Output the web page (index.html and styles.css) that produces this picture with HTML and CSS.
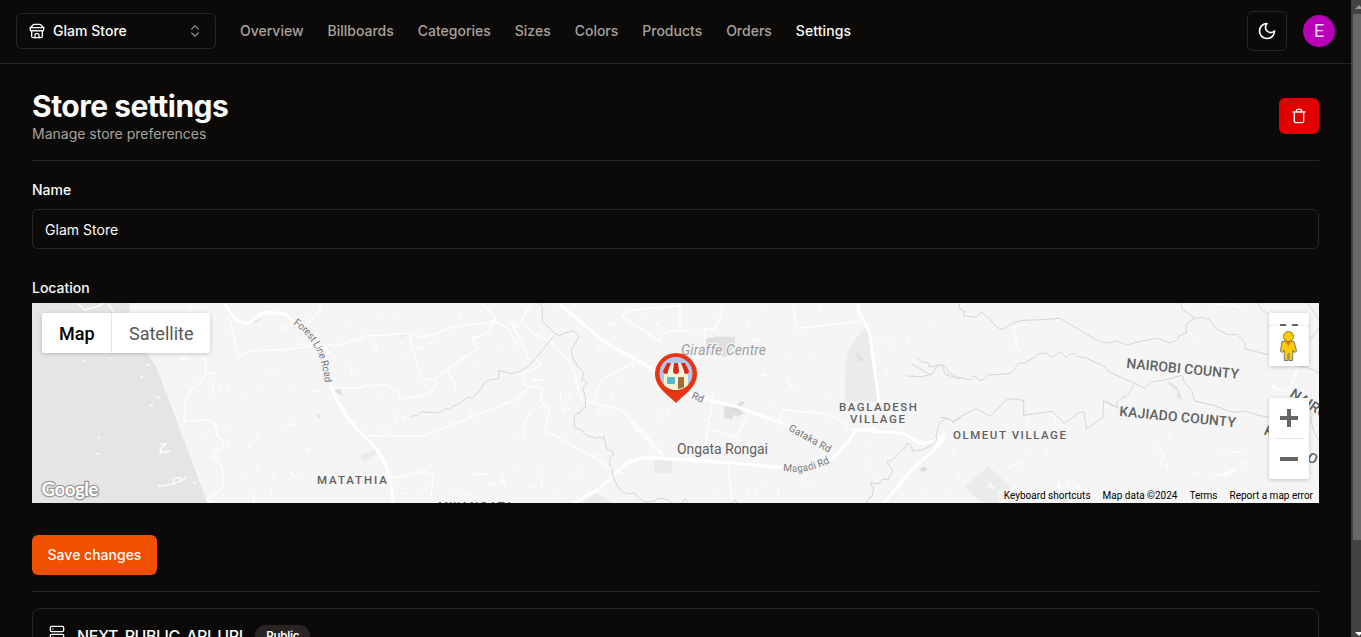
FILE: index.html
```html
<!DOCTYPE html>
<html lang="en">
<head>
<meta charset="utf-8">
<title>Store settings</title>
<link rel="stylesheet" href="styles.css">
</head>
<body>
<div class="app">
<div class="page">
  <header class="topbar">
    <button class="switcher">
      <svg class="icon16" viewBox="0 0 24 24"><path d="m2 7 4.41-4.41A2 2 0 0 1 7.83 2h8.34a2 2 0 0 1 1.42.59L22 7"/><path d="M4 12v8a2 2 0 0 0 2 2h12a2 2 0 0 0 2-2v-8"/><path d="M15 22v-4a2 2 0 0 0-2-2h-2a2 2 0 0 0-2 2v4"/><path d="M2 7h20"/><path d="M22 7v3a2 2 0 0 1-2 2a2.700 2.700 0 0 1-1.590-.63.700.700 0 0 0-.82 0A2.700 2.700 0 0 1 16 12a2.700 2.700 0 0 1-1.590-.63.700.700 0 0 0-.82 0A2.700 2.700 0 0 1 12 12a2.700 2.700 0 0 1-1.590-.63.700.700 0 0 0-.82 0A2.700 2.700 0 0 1 8 12a2.700 2.700 0 0 1-1.590-.63.700.700 0 0 0-.82 0A2.700 2.700 0 0 1 4 12a2 2 0 0 1-2-2V7"/></svg>
      <span>Glam Store</span>
      <svg class="icon16 chevrons" viewBox="0 0 24 24"><path d="m7 15 5 5 5-5M7 9l5-5 5 5"/></svg>
    </button>
    <nav class="nav">
      <a>Overview</a><a>Billboards</a><a>Categories</a><a>Sizes</a><a>Colors</a><a>Products</a><a>Orders</a><a class="active">Settings</a>
    </nav>
    <button class="theme"><svg class="icon20" viewBox="0 0 24 24"><path d="M12 3a6 6 0 0 0 9 9 9 9 0 1 1-9-9Z"/></svg></button>
    <div class="avatar">E</div>
  </header>
  <main class="content">
    <div class="heading">
      <div><h1>Store settings</h1><p>Manage store preferences</p></div>
      <button class="delete"><svg class="icon16" viewBox="0 0 24 24"><path d="M3 6h18M19 6v14c0 1-1 2-2 2H7c-1 0-2-1-2-2V6M8 6V4c0-1 1-2 2-2h4c1 0 2 1 2 2v2"/></svg></button>
    </div>
    <hr>
    <form class="form">
      <div class="field"><label class="name-label">Name</label><input value="Glam Store"></div>
      <div class="field">
        <label>Location</label>
        <div class="map">
          <svg class="tiles" viewBox="32 303 1287 200">
            <rect class="land" x="32" y="303" width="1287" height="200"/>
            <g transform="translate(32 300) scale(.33333)">
              <path class="park" d="M0 0H294L292 39Q320 130 372 198L530 618H0Z"/>
              <path class="shade" d="M30 190q50-25 80 0q-20 30-50 25zM120 190q30 30 30 70l-90 10q50-20 60-80zM210 190l90-60q-10 60-60 90zM20 410q70-20 100-70l80 20q-10 60-70 70l-40 50q-60 0-70-70zM230 410q60-10 110-60q0 60-90 80zM90 520q60-20 120-50q-20 60-80 60zM250 550l90-40q-20 60-90 60z"/>
              <path class="road" d="M136 10l22 20q35-8 58-20M228 10l17 26M480 10l-10 20M590 50l30 120l40-17l100-4l110-15l45 4l80-28M866 10l-4 22l-36 40M900 264h90M445 160l8 22l15-20M500 160q25 20 23 52q-5 30-45 58q-22 22-18 50q0 20-5 45l70-6q32 8 32 48q35 28 0 42q-20 12-15 22q30 20 30 45v40q0 15-48 42l32 29"/>
              <path class="road r2" d="M572 0l23 38Q615 70 650 70Q680 38 715 37L760 42L800 80M870 130l22 30M897 240v22q28 75 93 140"/>
              <path class="river" d="M665 68l18-10"/>
              <path class="road" d="M378 558q45-1 85-24l-3-4M426 552l-3-16l21-4l4 14M384 432h18l-17 14l4 12l24-5M388 445l-5 14M484 546l9 5M153 180l8 5M325 234l8-5M346 193l8 6M372 290l14 6M352 315l11 3M196 411l8 4M192 459l11 6M516 219h35M712 213l18-5M562 258l6 15M543 245l-2 38M630 297l14-7M756 382l35-12M668 405l18 12M583 439l10-5M647 442l12-6M822 443l12 8M776 516l12 16h15M734 521l-16 8M683 498l-9 19M640 512v16M580 374l4 10M750 84h20M930 205l11-4M957 213l5 18M945 64l10-3M820 130l-20 5M910 295l30 35M665 575v33M716 568l3 14M760 590h15M553 397v13M507 417l7-4M782 260l12-5M848 274h16M588 258l4 12M678 268h12M900 175l10-9"/>
              <path class="building b2" d="M908 270l15-3l12 20l-18-5zM848 341l15 5v10z"/>
            </g>
            <g transform="translate(360 300) scale(.33333)">
              <path class="building" d="M112 100h32l-6 8l-20 7zM0 466l48-18v16L10 490zM884 480l52 3v38l-54-2z"/><path class="building" d="M665 610l43-30l52 30z"/>
              <path class="road" d="M4 125v-16l145-9l37 12l46-12l46-18l130-18M365 10l42 40v15l35 20l34 50l14-2l-32-50l18-6l-12-5h-20M483 68l30-58M490 135l16 45M485 70l37 30l50 25l40 40q20 20 30 50l23 85l48 12l65 15q53 43 130 135M565 120l16-20M148 100l10 50l27 85l39 3l75-57l57-35l-20-33l28-5q35-20 37-53M260 212l15 22l12 20l-5 20M0 259l88-6l12 18h15l7 27l75-14l28-20v-28M25 407h168L465 300l48-42l35 8l-8 35l28 29l-14 60l155 85l35 26l47 19M700 310l22-68l100-57M526 177l18 14l-16 15l-37 15v32l20 6M513 335l-23 40l4 42M90 536l105-23l25 15l-6 50l4 30M786 50l18-18l155-15M786 50l115 75M900 125q5-30 40-32h50M960 12v82"/>
              <path class="road r2" d="M0 395Q60 450 81 505Q95 540 99 610M598 12l130 110L890 215M640 610L720 565L790 498Q825 470 875 472L990 480"/>
              <path class="river" d="M533 10q14 4 14 15v37l34 35l15 10l40-15q20 8 20 20l-22 38l5 25q12 25 34 45l-8 20q15 0 15 12l-12 12l8 25v33q-10 0-15 17q-20 0-18 15v28l25 10q3 15 32 20q10 10 15-3q10 12 16-2l10 40q20 5 19 18q-13 5-10 15l-2 15q15 10 8 20l5 20l15 30q20 22 45 14l30 26h30q15-15 35-7l42 20l18-22l15 22"/>
              <path class="river" d="M155 350l22-6q3-11 13-8l45 2l25-14l8 5q8-12 22-14l35-24l13 3l25-28q7-18 20-25l33-5v-25l38 10q25-3 58-28l17-20l26-32l27-37"/>
              <path class="road" d="M60 48l10 6M110 60l13-6M190 40l8-7M300 35l-5 15M310 72l12-5M380 95l13 2M36 142h14l-3 15M135 160l16 6M170 145l15-5M210 130h14M332 192l15-4M405 136l8-3M65 275l10 5M80 390v18M106 343v20M125 345l5 17M135 350v15M47 377l7 3M267 364l8 5M330 332v20M406 430l3-4M485 408l-14 8M515 240h35M535 320l5 8M572 368l8-5M602 275v33M630 275v20M608 324l5 12l18-10M710 340l15-15M640 440l9 5M700 460l12 8M755 275l5 15M785 252l10-8M815 203l10-10M823 180v-18M884 76l14-8M890 350l12-4M870 450v15M340 520q15 5 40 2M425 525l10 25l-15-6M400 552l-15 1M460 503l6-3M535 521l12-9M545 543v22M620 530l10-3M660 515l14 2M590 580l10 4M276 578h20M185 567l17 3M120 580h18M315 585l14-4M510 560h13M750 70l14 6M825 390l8-12M710 155l12-12"/>
            </g>
            <g transform="translate(630 300) scale(.33333)">
              <path class="building b2" d="M225 117l30-7h60v32l-30 30l-60-15zM284 318l30 2l20-18l12 5l-16 18l10 15l-15 10l-14-6l-5 16l-25-8z"/>
              <path class="building" d="M706 80L722 115L745 305H645V240Q645 170 665 135Z"/><path class="building b2" d="M676 155l18 15l6 18l-12-5zM866 510l15-12l13 10l-13 8z"/>
              <path class="road" d="M275 10v35l-20 40l-30 5v55M255 85h-45M248 280v20L218 480M240 388l80 22l35-70M445 365l12-36l125 12l60 25l10 23h30M490 12l10 74l195-22M295 495l12 113M0 365l95 100M185 175l30-5"/>
              <path class="road r2" d="M175 280l70 22l75 18l165 60M485 380l120 75M0 488q30-18 70-14l150 8l235 20M600 480l18-14l40-45l20-32L820 400l50 30l37-4l35-17L912 450l-62 55l-60 70l-30 35M685 10v20l35 72l10 78l15 112v20M678 390l62-5"/>
              <path class="river" d="M707 610q8-18 20-22l3-20l-8-18h28q5-20 23-10l15-28l-18-28q25-3 37-25q18-10 23-28q15-2 18 23q30-2 52-15l20-18l-2-15l10-35q15-17 32-14l10 10l20-12M827 228l50 2l30-8l16-28q20-5 20 28l47 15M845 192l35 20l25 14M864 176l10 9l23 5v10l30-4M305 610q12-20 15 0"/>
              <path class="road" d="M395 35l10-5M565 30l12-3M355 60v16M475 167l5 10M545 177l10-2M395 225h15M475 225v16M480 250l10 15M410 310h12M590 293l5-5M770 215v14M785 125l5 15M750 130l6-8M830 110l7 8M890 65l12 5M770 270l6 3M80 265l12 5M50 190l8-8M40 45h9M110 335l8 8M220 360l13 2M515 540h13M536 555l10 4M445 570v18M395 556h10M353 580l4 17M377 576v14M260 578l-12 4M700 430l8 8M710 465v12M720 500l8-4M800 545l10 3M730 540h14M870 585l10-5M540 415h15M370 120l13 4"/>
            </g>
            <g transform="translate(940 300) scale(.33333)">
              <path class="building" d="M74 560L145 497L210 560L170 609H125Z"/><path class="building b2" d="M686 243l28 22l13 35l-15-8v-20l-26-20zM495 300l38 21l-20-3z"/>
              <path class="river" d="M57 12l3 15l15 8l-5 12l38 5l17-15l28 22q12 25 35 29l15-10q25-20 85-18L360 55l110 65l30 10l30-7l30 12l48-13l45-7l35 14q28-7 28-20l25-12q-10-10 3-30l20-12l-38-28l-3-20M765 55q35-8 52 12q5 20 25 25l20 12h30l23 22v20l75 20M957 8q-2 17 14 25l23 15M1060 40l22 40l32 35l24-30M1103 10q20 30 35 50"/>
              <path class="river" d="M0 195q20 0 25 22l30 15l35 8q5-15 18-10q10 25 38-5l65-4l27-32h15l27-15q13-17 38-15l15 12l30-15l15 18q18-25 33-5l28 5l35 17q20 5 30 23l110 50l18-18l50-7q25-10 45-13l5 20l25 28l5 28l62 15q30 12 55 20l40-3l30 10l65 15l15-30l30-5M550 295q20-10 32-45M0 353q25-5 38 13l15-12l55-28l43 22l40-40q10-20 60-6v44l85-12l36 35l30-18q10-17 32-14v25q5 5 5 25l50-35l2-50l43 23l-4-18l25-20M1060 195q20 10 35 5q20 5 42 20M1105 320q18 20 8 40q5 35 23 60"/>
              <path class="road" d="M257 73l-27 2l-10 20l8 25l8 28l7 12M220 142l20 8M822 15l45-3M875 15l32 8M750 95l10 20M1075 200l-28 75l-48-10v-8l12 5M655 440l18 30l-15 24l22-3l3 16M200 503l45-14M823 530l60-20l-5 8l-30 10M760 520h15M905 495l20-8M840 445l10 5M870 455l40 4M50 522l8 10M0 410l12-10v20l-12 15zM35 450h10M146 565l5-15l5 12l9 4M270 460l3 12M310 455l15 8M355 545v15l10 5M385 545v20M410 555l10 12M385 495l-5-6M340 345l8 28M265 350l-8 12M280 375l12-4M686 400l5 18M30 575l10 6M975 395l-10 5"/>
            </g>
            <defs>
              <path id="forest" d="M293 324Q325 345 325 392"/>
              <path id="gataka" d="M788 430L836 457"/>
              <path id="magadi" d="M783 471Q812 475 838 458"/>
            </defs>
            <g class="map-text">
              <text class="rd narrow"><textPath href="#forest">Forest Line Road</textPath></text>
              <text class="rd"><textPath href="#gataka">Gataka Rd</textPath></text>
              <text class="rd"><textPath href="#magadi">Magadi Rd</textPath></text>
              <text class="rd" transform="translate(691 398) rotate(24)">Rd</text>
              <text class="poi" x="681" y="355" textLength="85">Giraffe Centre</text>
              <text class="city" x="677" y="454" textLength="91">Ongata Rongai</text>
              <text class="place" x="317" y="484" textLength="70">MATATHIA</text>
              <text class="place" x="839" y="411" textLength="78">BAGLADESH</text>
              <text class="place" x="850" y="423" textLength="55">VILLAGE</text>
              <text class="place" x="953" y="439" textLength="113">OLMEUT VILLAGE</text>
              <text class="place" x="438" y="510" textLength="75">MWANGATA</text>
              <text class="city faint" x="1060" y="511" textLength="32">Tuala</text>
              <text class="county" transform="translate(1126 368) rotate(5.500)" textLength="113">NAIROBI COUNTY</text>
              <text class="county" transform="translate(1119 416) rotate(5.500)" textLength="117">KAJIADO COUNTY</text>
              <text class="county" transform="translate(1289 396) rotate(33)">NAIROBI</text>
              <text class="county" transform="translate(1263 434) rotate(25)">K</text>
              <text class="county" transform="translate(1306 460) rotate(30)">O C</text>
              <text class="google" x="41.500" y="495.500" textLength="57">Google</text>
            </g>
            <g transform="translate(655 353)">
              <path fill="#ea3514" d="M21 0a21 21 0 0 1 21 21c0 13-12 20-21 29C12 41 0 34 0 21A21 21 0 0 1 21 0z"/>
              <circle cx="21" cy="20.500" r="16.500" fill="#a9c8f2"/>
              <path fill="#f2f5ce" d="M9 18h24v14q-5 5-12 5t-12-5z"/>
              <path fill="#f5f3ee" d="M12 10h18l4 8q0 3-2.500 3T29 18q-1 3-3.500 3T21 18q-1 3-4 3t-4-3q-1 3-3 3t-2-3z"/>
              <path fill="#df2416" d="M12 10h4l-3 8q0 3-2.500 3T8 18zM19 10h4l1 8q0 3-3 3t-3-3zM26 10h4l4 8q0 3-2.500 3T29 18z"/>
              <rect x="12" y="24" width="8" height="7" rx="1" fill="#5bb5cf"/><path fill="#a56b3c" d="M23 25q0-1 1-1h4q1 0 1 1v9q-3 2-6 2z"/>
            </g>
          </svg>
          <div class="map-type"><span class="on">Map</span><span>Satellite</span></div>
          <div class="map-side">
            <div class="full"><i></i><i></i></div>
            <div class="pegman"><svg viewBox="0 0 40 40"><path fill="#ffcb00" stroke="#75776c" d="M13 15.500q6-2 12 0l2.500 9.500q-1 2-2.500 1l-1-2-.5 10.500h-3.500v-7h-1v7h-3.500l-.5-10.500-1 2q-1.500 1-2.500-1z"/><path fill="#e68200" d="M15.500 15h7l-3 5z"/><circle cx="19.500" cy="10.500" r="5" fill="#ffcb00" stroke="#8a7b28"/></svg></div>
            <div class="zoom"><b class="plus"></b><hr><b></b></div>
          </div>
          <div class="legal"><span>Keyboard shortcuts</span><span>Map data ©2024</span><span>Terms</span><span>Report a map error</span></div>
        </div>
      </div>
      <button class="save">Save changes</button>
    </form>
    <hr>
    <section class="alert">
      <svg class="icon16" viewBox="0 0 24 24"><rect x="2" y="2" width="20" height="8" rx="2"/><rect x="2" y="14" width="20" height="8" rx="2"/><path d="M6 6h.01M6 18h.01"/></svg>
      <h5>NEXT_PUBLIC_API_URL</h5><span class="badge">Public</span>
    </section>
  </main>
</div>
<div class="scrollbar"><i class="up"></i><div class="thumb"></div><i class="down"></i></div>
</div>
</body>
</html>
```
FILE: styles.css
```css
* { box-sizing: border-box; }
body { margin: 0; background: #0c0a09; color: #fafaf9; font-family: Inter, sans-serif; font-size: 14px; line-height: 20px; overflow: hidden; }
button, input { font: inherit; color: inherit; background: none; border: 1px solid #292524; border-radius: 6px; padding: 0; }
h1, h5, p { margin: 0; }
hr { border: 0; height: 1px; margin: 16px 0; background: #292524; }
svg { display: block; }
.icon16, .icon20 { width: 16px; height: 16px; flex: none; fill: none; stroke: currentColor; stroke-width: 2; stroke-linecap: round; stroke-linejoin: round; }
.icon20 { width: 20px; height: 20px; margin-right: 1px; }
.app { display: flex; height: 637px; overflow: hidden; }
.page { flex: 1; min-width: 0; }
.topbar { display: flex; align-items: center; height: 64px; padding: 0 16px 2px; border-bottom: 1px solid #292524; }
.switcher { display: flex; align-items: center; gap: 8px; width: 200px; height: 36px; padding: 0 12px; font-weight: 500; letter-spacing: .02px; }
.chevrons { margin-left: auto; opacity: .5; }
.nav { display: flex; gap: 23.95px; margin-left: 24px; font-weight: 500; color: #a8a29e; }
.nav .active { color: #fafaf9; letter-spacing: .1px; }
.theme { display: grid; place-items: center; width: 40px; height: 40px; margin-left: auto; }
.avatar { display: grid; place-items: center; width: 32px; height: 32px; margin-left: 16px; border-radius: 50%; background: #b900b8; color: #f6daf6; font: 18px Roboto, sans-serif; }
.content { padding: 24px 32px; }
.heading { display: flex; align-items: center; justify-content: space-between; }
h1 { font-size: 30px; line-height: 36px; font-weight: 700; letter-spacing: -.5px; }
.heading p { color: #a8a29e; }
.delete { display: grid; place-items: center; width: 40px; height: 36px; background: #e00000; border: 0; }
.form { display: grid; gap: 32px; }
.field { display: grid; gap: 8px; }
.field label { font-weight: 500; line-height: 14px; }
.field .name-label { height: 24px; line-height: 26px; }
.field input { width: 100%; height: 40px; padding: 0 12px; letter-spacing: .03px; }
.save { width: 125px; height: 40px; border: 0; background: #f05000; font-weight: 500; }
.map { position: relative; height: 200px; overflow: hidden; font-family: Roboto, sans-serif; }
.tiles { width: 100%; height: 200px; }
.land { fill: #f5f5f5; }
.park { fill: #e5e5e5; }
.shade { fill: #e7e7e7; }
.building { fill: #ebebeb; }
.b2 { fill: #dfdfdf; }
.road { fill: none; stroke: #fff; stroke-width: 4; stroke-linejoin: round; }
.r2 { stroke-width: 9; }
.river { fill: none; stroke: #d4d4d4; stroke-width: 3; stroke-linejoin: round; }
.map-text text { fill: #616161; stroke: #f5f5f5; stroke-width: 2.5px; paint-order: stroke; font-family: Roboto, sans-serif; }
.map-text .rd { font-size: 10.2px; fill: #757575; }
.map-text .narrow { letter-spacing: -.45px; }
.map-text .poi { font-size: 14px; font-style: italic; fill: #9e9e9e; }
.map-text .city { font-size: 14px; }
.map-text .faint { fill: #bdbdbd; }
.map-text .place { font-size: 11.5px; font-weight: 500; }
.map-text .county { font-size: 14px; font-weight: 500; }
.map-text .google { font: 700 19px Lato, sans-serif; fill: #fff; stroke: #999; }
.map-type { position: absolute; left: 10px; top: 10px; display: flex; width: 168px; height: 40px; border-radius: 2px; background: #fff; box-shadow: 0 1px 4px rgba(0,0,0,.2); font-size: 18px; line-height: 41px; color: #565656; white-space: nowrap; }
.map-type span { padding: 0 0 0 17px; }
.map-type .on { width: 70px; font-weight: 500; color: #000; border-right: 1px solid #e6e6e6; }
.map-side { position: absolute; right: 10px; top: 10px; width: 40px; }
.full, .pegman, .zoom { background: #fff; border-radius: 2px; box-shadow: 0 1px 4px rgba(0,0,0,.2); }
.full { display: flex; justify-content: center; gap: 6px; height: 13px; padding-top: 11px; }
.full i { width: 6px; height: 2px; background: #666; }
.pegman { height: 40px; }
.zoom { display: grid; grid-template-rows: 40px 1px 40px; align-items: center; justify-items: center; height: 81px; margin-top: 32px; }
.zoom hr { width: 30px; margin: 0; background: #e6e6e6; }
.zoom b { width: 18px; height: 4px; background: #666; }
.zoom .plus { height: 18px; background: linear-gradient(#666, #666) center / 18px 4px no-repeat, linear-gradient(#666, #666) center / 4px 18px no-repeat; }
.legal { position: absolute; right: 0; bottom: 0; display: flex; gap: 12px; height: 14px; padding: 0 6px; background: rgba(245,245,245,.7); color: #000; font-size: 10px; line-height: 14px; }
.alert { display: flex; align-items: flex-start; height: 90px; padding: 16px; border: 1px solid #292524; border-radius: 8px; }
.alert h5 { margin: 3px 12px 0; font-size: 16px; line-height: 16px; font-weight: 500; letter-spacing: -.43px; }
.alert .badge { width: 55px; height: 22px; margin-left: -4px; border-radius: 11px; background: #292524; font-size: 11.5px; letter-spacing: -.2px; line-height: 22px; font-weight: 600; text-align: center; }
.scrollbar { display: flex; flex-direction: column; width: 10px; padding: 5px 0 1px 2px; background: #424242; }
.scrollbar .thumb { height: 526px; background: #686868; margin: 5px 0 auto; }
.up, .down { width: 0; height: 0; margin-left: 2px; border: 4px solid transparent; border-top: 0; border-bottom-color: #999; }
.down { border-top: 4px solid #fff; border-bottom: 0; }
```
